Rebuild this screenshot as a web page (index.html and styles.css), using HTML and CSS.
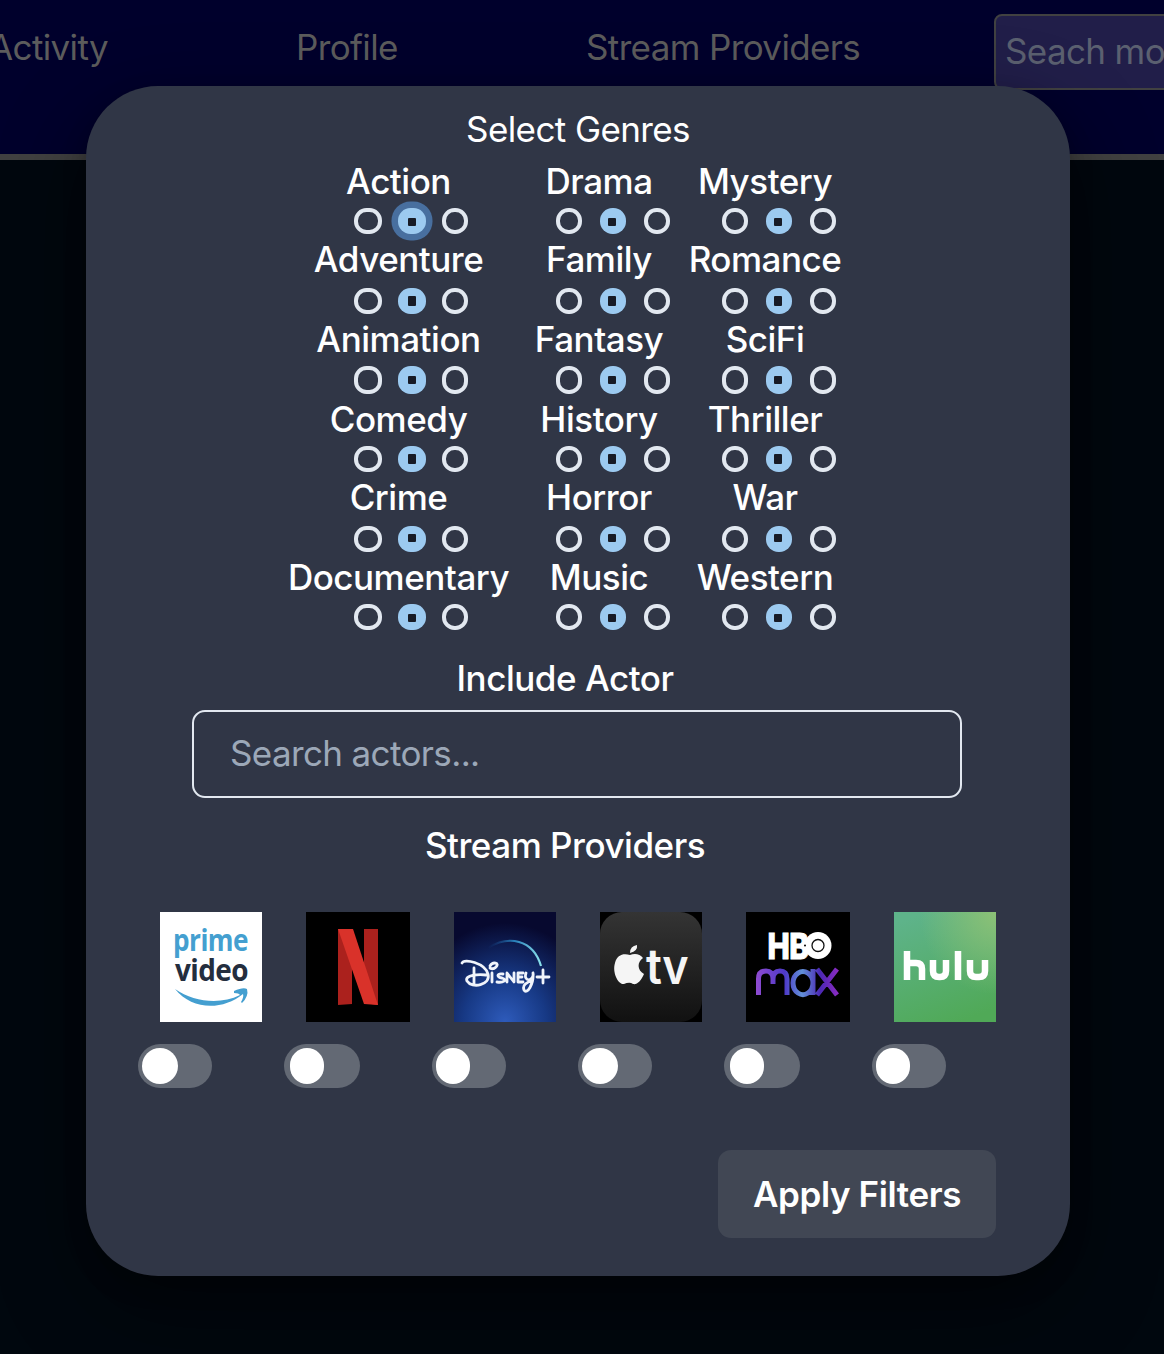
FILE: index.html
```html
<!DOCTYPE html>
<html lang="en"><head><meta charset="utf-8"><title>Filters</title><link rel="stylesheet" href="styles.css"></head>
<body>
<header class="nav">
  <a class="nav-link activity">Activity</a>
  <a class="nav-link profile">Profile</a>
  <a class="nav-link providers-link">Stream Providers</a>
  <div class="nav-search">Seach movies</div>
</header>
<div class="overlay">
<main class="modal">
  <h2 class="title genres-title">Select Genres</h2>
  <div class="genres" id="genres"></div>
  <h2 class="title actor-title">Include Actor</h2>
  <div class="actor-input">Search actors...</div>
  <h2 class="title providers-title">Stream Providers</h2>
  <div class="providers">
    <div class="provider"><svg class="logo" viewBox="0 0 102 110"><rect width="102" height="110" fill="#fff"/><text x="13" y="38.500" textLength="75" lengthAdjust="spacingAndGlyphs" font-family="Open Sans" font-weight="700" font-size="31" fill="#449fd0">prime</text><text x="15" y="69" textLength="73" lengthAdjust="spacingAndGlyphs" font-family="Open Sans" font-weight="700" font-size="31" fill="#242e3e">video</text><path d="M15 77C34 90 60 93 80 83Q79 81 74 81V79Q83 75 87 77Q89 84 82 91L81 90Q84 85 83 82C62 99 32 98 15 77Z" fill="#449fd0"/></svg><span class="switch"><i></i></span></div>
    <div class="provider wide"><svg class="logo" viewBox="0 0 104 110"><rect width="104" height="110"/><path d="M32 17H46V92L32 93ZM58 17H72V93L58 91Z" fill="#ab211d"/><path d="M32 17H47L72 93L58 92Z" fill="#d9322a"/></svg><span class="switch"><i></i></span></div>
    <div class="provider"><svg class="logo" viewBox="0 0 102 110"><defs><radialGradient id="db" cx=".5" cy="1" r=".9"><stop stop-color="#2e5bbb"/><stop offset=".45" stop-color="#173985"/><stop offset="1" stop-color="#07092f"/></radialGradient><linearGradient id="da"><stop stop-color="#16488f" stop-opacity="0"/><stop offset=".5" stop-color="#287fba"/><stop offset="1" stop-color="#8ae2ec"/></linearGradient></defs><rect width="102" height="110" fill="url(#db)"/><path d="M34 36C54 23 79 27 87 54" fill="none" stroke="url(#da)" stroke-width="2.2"/><g fill="none" stroke="#f0f4fb" stroke-width="2.8" stroke-linecap="round" stroke-linejoin="round"><path d="M8 51C10 46 31 51 34 62C37 73 18 77 13 69C10 63 25 62 32 63M20 56V73"/><path d="M38 61V70M36 54C39 49 46 51 42 55Q39 58 36 56M49 62C43 61 42 65 48 66C54 68 49 71 43 70M53 70V61L60 70V61M69 61H64V70H69M64 65H68M72 61Q70 67 75 68Q80 66 79 61M79 61C80 72 73 83 70 78C68 73 73 70 78 69M83 65H95M89 58V71"/></g></svg><span class="switch"><i></i></span></div>
    <div class="provider"><svg class="logo" viewBox="0 0 102 110"><defs><linearGradient id="ap" x2="0" y2="1"><stop stop-color="#343434"/><stop offset="1" stop-color="#111"/></linearGradient></defs><rect width="102" height="110"/><rect width="102" height="110" rx="22" fill="url(#ap)"/><path d="M30 43C35 41 40 42 43 46C37 50 37 58 44 62C41 69 37 73 33 72C30 70 27 71 24 72C18 73 12 60 15 51C17 43 23 41 30 43ZM30 41Q30 34 37 33Q38 39 30 41Z" fill="#f5f5f5"/><text x="46" y="72" textLength="42" lengthAdjust="spacingAndGlyphs" font-family="Inter" font-weight="600" font-size="49" fill="#f5f5f5">tv</text></svg><span class="switch"><i></i></span></div>
    <div class="provider wide"><svg class="logo" viewBox="0 0 104 110"><defs><linearGradient id="hb" gradientUnits="userSpaceOnUse" x1="10" x2="92"><stop stop-color="#8f4bd1"/><stop offset=".35" stop-color="#4d39c7"/><stop offset=".56" stop-color="#6290d8"/><stop offset=".78" stop-color="#4b28b4"/><stop offset="1" stop-color="#8a2bc1"/></linearGradient></defs><rect width="104" height="110"/><text x="21.500" y="46.500" textLength="41" lengthAdjust="spacingAndGlyphs" font-family="Inter" font-weight="800" font-size="36" stroke="#fff" fill="#fff">HB</text><circle cx="72" cy="33.500" r="13.500" fill="#fff"/><circle cx="72" cy="33.500" r="6" fill="none" stroke="#111" stroke-width="1.300"/><circle cx="59" cy="33.500" r="1"/><g fill="none" stroke="url(#hb)" stroke-width="5"><path d="M12.500 83V67Q12.500 59 20 59Q27 59 27 67V72M27 67Q27 59 34 59Q41 59 41 67V83M67 71A10 11.500 0 1 0 67 71.100M67 57V83M71 57L91 83M91 57L71 83"/></g></svg><span class="switch"><i></i></span></div>
    <div class="provider"><svg class="logo" viewBox="0 0 102 110"><defs><linearGradient id="hu" x1=".3" x2=".65" y2="1"><stop stop-color="#5eb38a"/><stop offset="1" stop-color="#50a957"/></linearGradient><radialGradient id="hg" cx="1" cy="0" r=".75"><stop stop-color="#8cc176"/><stop offset="1" stop-color="#8cc176" stop-opacity="0"/></radialGradient></defs><rect width="102" height="110" fill="url(#hu)"/><rect width="102" height="110" fill="url(#hg)"/><path d="M13 39V68M13 51H22Q28 51 28 57V68M39 48V59Q39 65 45 65H46Q52 65 52 59V48M64 39V68M76 48V59Q76 65 82 65H85Q91 65 91 59V48" fill="none" stroke="#fff" stroke-width="6.500"/></svg><span class="switch"><i></i></span></div>
  </div>
  <div class="actions"><button class="apply">Apply Filters</button></div>
</main>
</div>
<script src="app.js"></script>
</body></html>
```
FILE: styles.css
```css
* { box-sizing: border-box; }
body { margin: 0; width: 1164px; height: 1354px; overflow: hidden; background: #00070e; font-family: Inter, sans-serif; font-size: 35px; line-height: 44px; letter-spacing: -.63px; color: #fff; }
.nav { display: flex; align-items: flex-start; height: 160px; background: #00002c; border-bottom: 6px solid #414141; color: #5c5c5c; white-space: nowrap; overflow: hidden; }
.nav-link { padding-top: 25px; flex: none; }
.activity { width: 307px; margin-left: -11px; }
.profile { width: 290px; }
.providers-link { width: 408px; }
.nav-search { flex: none; width: 400px; height: 76px; margin-top: 14px; padding: 13px 9px; border: 2px solid #414141; border-radius: 8px; background: #211e49; color: #5b6070; }
.overlay { position: absolute; inset: 0; display: flex; justify-content: center; align-items: flex-start; padding: 86px 94px 0 86px; }
.modal { width: 984px; height: 1190px; border-radius: 72px; background: #303646; box-shadow: 0 11px 22px rgba(0,0,0,.25), 0 33px 88px rgba(0,0,0,.45); }
.title { margin: 0; font-size: 35px; line-height: 44px; font-weight: 500; text-align: center; letter-spacing: -.48px; }
.genres-title { font-weight: 400; padding-top: 21px; letter-spacing: -.6px; }
.genres { display: flex; height: 505px; padding-left: 202px; }
.column { flex: none; font-weight: 500; letter-spacing: -.48px; --dot-left: 8px; }
.column:nth-child(1) { width: 221px; margin-right: 27px; --start: 66px; --dot-left: 10px; }
.column:nth-child(2) { width: 126px; margin-right: 28px; --start: 20px; }
.column:nth-child(3) { width: 150px; --start: 32px; }
.genre { padding-top: 8px; height: 80px; white-space: nowrap; --dot-top: 10px; --dot-height: 8px; --radio-height: 26px; }
.genre:nth-child(1), .genre:nth-child(4) { height: 78px; }
.genre:nth-child(2), .genre:nth-child(4) { --dot-top: 8px; --dot-height: 10px; }
.genre:nth-child(3) { --radio-height: 28px; }
.genre:nth-child(5) { --dot-top: 8px; }
.name { display: flex; justify-content: center; height: 49px; }
.genre:nth-child(2) .name, .genre:nth-child(5) .name { height: 51px; }
.radios { display: flex; gap: 18px; padding-left: var(--start); }
.radio { flex: none; width: 26px; height: var(--radio-height); border: 4px solid #e2e8f0; border-radius: 12.5px; }
.column:first-child .radio { width: 28px; margin-right: -2px; }
.column:first-child .radio:last-child { width: 26px; }
.checked { padding: var(--dot-top) 0 0 var(--dot-left); border: 0; background: #9ccaf0; }
.checked::before { content: ""; display: block; width: 8px; height: var(--dot-height); border-radius: 1px; background: #171b26; }
.focused { box-shadow: 0 0 0 6.5px #486f9f; }
.actor-title { padding-right: 26px; }
.actor-input { margin: 10px 108px 0 106px; height: 88px; border: 2px solid #e2e8f0; border-radius: 13px; padding: 19px 36px; color: #9ca8b8; }
.providers-title { margin-top: 25px; padding-right: 26px; }
.providers { display: flex; margin: 45px 0 0 74px; }
.provider { width: 146px; flex: none; }
.provider:nth-child(2), .provider:nth-child(5) { width: 148px; }
.logo { display: block; width: 102px; height: 110px; }
.wide .logo { width: 104px; }
.switch { display: block; width: 74px; height: 44px; margin: 22px 0 0 -22px; padding: 4px; border-radius: 22px; background: #636974; }
.wide .switch { width: 76px; padding-left: 6px; }
.switch i { display: block; width: 34px; height: 36px; border-radius: 17px; background: #fff; }
.provider:nth-child(3n+1) i { width: 36px; border-radius: 18px; }
.actions { display: flex; justify-content: flex-end; margin: 62px 74px 0; }
.apply { width: 278px; height: 88px; border: 0; border-radius: 13px; background: #414754; color: #fff; font: 600 35px/44px Inter, sans-serif; letter-spacing: -.4px; }
```
FILE: app.js
```js
const columns = [
  ["Action", "Adventure", "Animation", "Comedy", "Crime", "Documentary"],
  ["Drama", "Family", "Fantasy", "History", "Horror", "Music"],
  ["Mystery", "Romance", "SciFi", "Thriller", "War", "Western"]
];
document.getElementById("genres").innerHTML = columns.map(names =>
  `<div class="column">${names.map(name => `<div class="genre"><div class="name">${name}</div><div class="radios"><span class="radio"></span><span class="radio checked${name === "Action" ? " focused" : ""}"></span><span class="radio"></span></div></div>`).join("")}</div>`
).join("");
```
